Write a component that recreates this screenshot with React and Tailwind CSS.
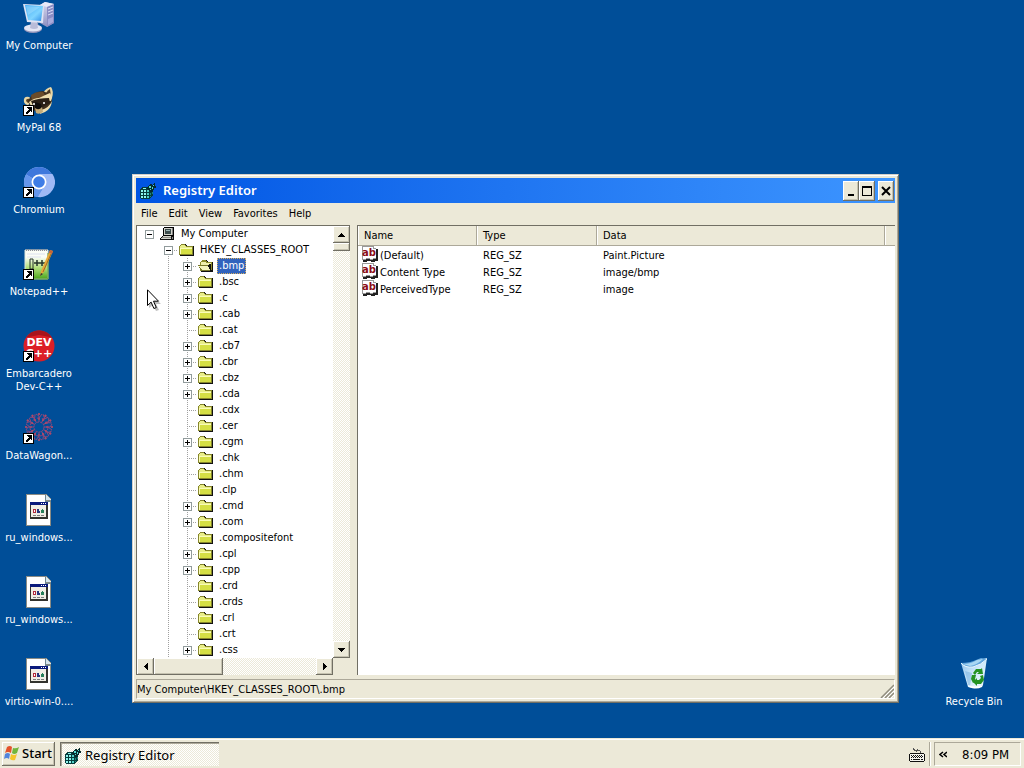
import React from 'react';

const RAISED =
  'bg-[#ece9d8] shadow-[inset_-1px_-1px_0_#716f64,inset_1px_1px_0_#ffffff,inset_-2px_-2px_0_#c5c2b0]';
const DITHER = 'bg-[repeating-conic-gradient(#ffffff_0_25%,#ece9d8_0_50%)] bg-[length:2px_2px]';
const DOTS_H = 'bg-[repeating-linear-gradient(90deg,#a0a0a0_0_1px,transparent_1px_2px)]';
const DOTS_V = 'bg-[repeating-linear-gradient(180deg,#a0a0a0_0_1px,transparent_1px_2px)]';

const keys = [
  ['.bmp', true],
  ['.bsc', true],
  ['.c', true],
  ['.cab', true],
  ['.cat', false],
  ['.cb7', true],
  ['.cbr', true],
  ['.cbz', true],
  ['.cda', true],
  ['.cdx', false],
  ['.cer', false],
  ['.cgm', true],
  ['.chk', false],
  ['.chm', false],
  ['.clp', false],
  ['.cmd', true],
  ['.com', true],
  ['.compositefont', false],
  ['.cpl', true],
  ['.cpp', true],
  ['.crd', false],
  ['.crds', false],
  ['.crl', false],
  ['.crt', false],
  ['.css', true],
];

const values = [
  { name: '(Default)', type: 'REG_SZ', data: 'Paint.Picture' },
  { name: 'Content Type', type: 'REG_SZ', data: 'image/bmp' },
  { name: 'PerceivedType', type: 'REG_SZ', data: 'image' },
];

function ShortcutArrow() {
  return (
    <g shapeRendering="crispEdges">
      <path d="M0 21h11v11H0z" fill="#000" />
      <path d="M1 22h9v9H1z" fill="#fff" />
      <path d="M4 23h5v5H8v-1H7v1H6v1H5v1H3v-2h1v-1h1v-1h1v-1H5v-1H4z" fill="#000" />
    </g>
  );
}

function ComputerIcon() {
  return (
    <svg width="32" height="32" viewBox="0 0 32 32">
      <defs>
        <linearGradient id="screen" x1="0" y1="0" x2="1" y2="1">
          <stop offset="0" stopColor="#3fa9f5" />
          <stop offset=".6" stopColor="#7fd4ff" />
          <stop offset="1" stopColor="#2f8fe8" />
        </linearGradient>
        <linearGradient id="tower" x1="0" y1="0" x2="0" y2="1">
          <stop offset="0" stopColor="#d9daf0" />
          <stop offset="1" stopColor="#8d8fc0" />
        </linearGradient>
      </defs>
      <path d="M17 3l5-3 9 2v19l-7 4-7-4z" fill="url(#tower)" />
      <path d="M17 3l5-3 9 2-7 3z" fill="#e8e9f8" />
      <path d="M24 5l7-3v19l-7 4z" fill="#8a8cc4" />
      <path d="M25 7l5-2M25 10l5-2M25 13l5-2" stroke="#dcdef6" />
      <path d="M25 17l5-2v5l-5 3z" fill="#a8aadb" />
      <path d="M8 21h7l1 5H7z" fill="#9a9cbe" />
      <ellipse cx="10" cy="27" rx="9" ry="4" fill="#9295bb" />
      <ellipse cx="10" cy="26" rx="9" ry="3.400" fill="#e4e6f4" />
      <path d="M8 20h6l1 6q-4 2-8 0z" fill="#b9bcd8" />
      <path d="M0 2l21 1-1 18L4 20z" fill="#dfe4f4" />
      <path d="M2 3l18 1-2 15L5 18z" fill="url(#screen)" />
      <path d="M3 4l14 1L5 13z" fill="#b4e6ff" opacity=".4" />
    </svg>
  );
}

function RaccoonIcon() {
  return (
    <svg width="32" height="32" viewBox="0 0 32 32">
      <path d="M1 18q-1-6 5-5l5 4-6 4q-3 0-4-3z" fill="#ead7a4" />
      <path d="M3 17q0-3 4-2l1 3-3 1z" fill="#5a4328" />
      <path d="M20 9q3-5 8-6 3 4 1 11l-4 3z" fill="#ead7a4" />
      <path d="M23 9q2-3 4-4 1 4 0 7z" fill="#4b3621" />
      <path d="M5 17Q10 7 20 7q8 3 9 10-2 9-10 11-10 2-14-11z" fill="#40301f" />
      <path d="M8 11q6-4 12-3l3 5-7 2-7 2z" fill="#6b4c2a" />
      <path d="M6 18q5-4 10-4 6-3 11-5l2 5-1 3q-6-1-11 2-6 0-9 3z" fill="#f0dfaf" />
      <path d="M8 17q8-3 18-3l1 5-7 4-4 1q-6 0-8-7z" fill="#2b2016" />
      <path d="M12 18l6 2 1 4-3 2-4-2z" fill="#120f0d" />
      <path d="M18 26q8-2 11-9-1 8-7 11l-5 2z" fill="#f0dfaf" />
      <circle cx="21" cy="19" r="1" fill="#fff" />
      <circle cx="11" cy="20" r="1" fill="#fff" />
      <path d="M12 24q4 3 7-1l1 5q-4 3-7 1z" fill="#c5ab78" />
      <ShortcutArrow />
    </svg>
  );
}

function ChromiumIcon() {
  return (
    <svg width="32" height="32" viewBox="0 0 32 32">
      <circle cx="16" cy="16" r="15" fill="#a5c5fb" />
      <path d="M16 16L3 8.500A15 15 0 0 1 29 8.500L31 16z" fill="#3f78dc" />
      <path d="M3 8.500A15 15 0 0 0 15 31l7-11-6-4z" fill="#6596eb" />
      <path d="M16 8h13.500A15 15 0 0 1 15 31l7-12z" fill="#9fb9f5" />
      <circle cx="16" cy="16" r="7.500" fill="#fff" />
      <circle cx="16" cy="16" r="5.800" fill="#3f7de6" />
      <ShortcutArrow />
    </svg>
  );
}

function NotepadIcon() {
  return (
    <svg width="32" height="32" viewBox="0 0 32 32">
      <defs>
        <linearGradient id="note" x1="0" y1="0" x2="0" y2="1">
          <stop offset=".25" stopColor="#fbfdf6" />
          <stop offset=".6" stopColor="#b5e17e" />
          <stop offset="1" stopColor="#4aa51a" />
        </linearGradient>
      </defs>
      <path d="M2 2h23v29H2z" fill="url(#note)" stroke="#dfe6dc" />
      <path d="M25 5v26H10" fill="none" stroke="#4c8f28" />
      <path d="M3 2h21" stroke="#90909a" strokeWidth="2" strokeDasharray="1 1" />
      <path d="M4 6h18M4 9h14" stroke="#dce0ee" />
      <path d="M7 11h3v10H7z" fill="none" stroke="#26352a" />
      <path d="M11 15h6M14 12v6M17 15h5M19 12v6" stroke="#26352a" strokeWidth="1.500" />
      <path d="M27 2l3 1-9 21-4 4 1-5z" fill="#e8a93b" />
      <path d="M27 2l3 1-1 3-3-1z" fill="#c66438" />
      <path d="M28 6l-8 18" stroke="#9e6b22" />
      <path d="M17 28l1-3 2 1z" fill="#333" />
      <ShortcutArrow />
    </svg>
  );
}

function DevIcon() {
  return (
    <svg width="32" height="32" viewBox="0 0 32 32">
      <circle cx="16" cy="16" r="15.500" fill="#dc1e26" />
      <path d="M16 .5a15.500 15.500 0 0 1 13 7L16 5 3 7.500a15.500 15.500 0 0 1 13-7z" fill="#a8141c" />
      <g fill="#fff" fontFamily="DejaVu Sans" fontWeight="bold" fontSize="11" textAnchor="middle">
        <text x="16" y="16">DEV</text>
        <text x="16" y="27">C++</text>
      </g>
      <ShortcutArrow />
    </svg>
  );
}

function WagonIcon() {
  const spokes = [0, 30, 60, 90, 120, 150, 180, 210, 240, 270, 300, 330];
  return (
    <svg width="32" height="32" viewBox="0 0 32 32">
      <g fill="none" stroke="#8d477b" strokeWidth="1">
        <circle cx="16" cy="15" r="5" strokeDasharray="2 1" />
        <circle cx="16" cy="15" r="9" strokeDasharray="3 2" />
        {spokes.map((a) => (
          <g key={a} transform={`rotate(${a} 16 15)`}>
            <path d="M16 10V4l-3-2M16 6l3-4" />
            <circle cx="16" cy="2" r=".7" fill="#b44a68" stroke="#b44a68" />
            <circle cx="16" cy="7" r=".5" stroke="#bd4864" />
          </g>
        ))}
      </g>
      <ShortcutArrow />
    </svg>
  );
}

function BatchIcon() {
  return (
    <svg width="32" height="32" viewBox="0 0 32 32" shapeRendering="crispEdges">
      <path d="M3 0h20l5 5v27H3z" fill="#8b8b84" />
      <path d="M4 1h18v6h5v24H4z" fill="#fff" />
      <path d="M23 1v5h5z" fill="#d7e7ef" />
      <path d="M22 1v6h6" fill="none" stroke="#6d858f" />
      <path d="M7 8h18v17H7z" fill="#33332e" />
      <path d="M8 9h15v14H8z" fill="#f1eee5" />
      <path d="M7 8h18v3H7z" fill="#0a1a7c" />
      <path d="M18 9h1v1h-1zM20 9h1v1h-1zM22 9h1v1h-1z" fill="#fff" />
      <path d="M10 15h3v4h-3z" fill="#b12a3b" />
      <path d="M11 16h1v2h-1z" fill="#fff" />
      <path d="M14 15h2v2h1v2h-3z" fill="#28367e" />
      <path d="M18 16h3v3h-3zM19 15h1v1h-1z" fill="#27805a" />
      <path d="M10 21h3M14 21h3M18 21h3" stroke="#7e7e7e" />
    </svg>
  );
}

function RecycleIcon() {
  return (
    <svg width="32" height="32" viewBox="0 0 32 32">
      <defs>
        <linearGradient id="bin" x1="0" y1="0" x2="1" y2="1">
          <stop offset="0" stopColor="#86bdeb" />
          <stop offset=".5" stopColor="#cfe9fa" />
          <stop offset="1" stopColor="#f2fbff" />
        </linearGradient>
      </defs>
      <path d="M3 5Q15 8 20 2l9-2-4 27q-6 5-15 2z" fill="url(#bin)" />
      <path d="M3 5q9 0 15-3l5-2 6 1q-6 6-14 8-8 1-12-4z" fill="#62a5dc" />
      <path d="M5 6q8 0 14-4l6-1q-6 6-13 7z" fill="#a9d7f3" />
      <path d="M3 5q4 5 12 4 8-2 14-8" fill="none" stroke="#eefaff" />
      <path d="M7 13l7 2-2 13-2-1z" fill="#7ab3e0" opacity=".55" />
      <path d="M10 27q7 3 15 0l-1 2q-6 3-13 0z" fill="#fff" />
      <g fill="#259323">
        <path d="M15 15l3-4h5l1-1 1 6h-6l2-2h-2l-2 3z" />
        <path d="M25 17l1 5-3 4h-4v2l-4-4 4-4v2h2l2-2-1-2z" />
        <path d="M14 17h4l-1 4 1 2-3 2-2-4z" />
      </g>
    </svg>
  );
}

function RegeditIcon() {
  return (
    <svg width="16" height="16" viewBox="0 0 16 16" className="shrink-0" shapeRendering="crispEdges">
      <path d="M0 6l3-2h4l2 1h3l1 1v6l-4 4H1l-1-1z" fill="#063c3c" />
      <path d="M1 7h2v2H1zM4 7h2v2H4zM1 10h2v2H1zM4 10h2v2H4zM1 13h2v2H1zM4 13h2v2H4zM3 5h3v1H3z" fill="#8ff5ee" />
      <path d="M7 7h2v2H7zM7 10h2v2H7zM7 13h2v2H7z" fill="#4fd0c8" />
      <path d="M10 10h1v2h-1zM10 13h1v1h-1zM12 9h1v2h-1z" fill="#188880" />
      <path d="M7 4l3-2V1h2v1l2-2h1v2l-1 1h2v2h-2v2h-1v2h-3L7 6z" fill="#052c2e" />
      <path d="M9 3h2v2H9zM12 4h1v2h-1zM10 6h1v1h-1zM13 2h1v1h-1z" fill="#52d9cf" />
    </svg>
  );
}

function PcIcon() {
  return (
    <svg width="16" height="16" viewBox="0 0 16 16" shapeRendering="crispEdges">
      <path d="M4 1h10v9H3V2z" fill="#000" />
      <path d="M4 2h8v7H4z" fill="#d0d0c8" />
      <path d="M5 3h6v5H5z" fill="#3c4c4c" />
      <path d="M6 4h4v1H6z" fill="#9cb4b4" />
      <path d="M12 2h1v7h-1z" fill="#808080" />
      <path d="M2 10h12v4H0v-2h1v-1h1z" fill="#111" />
      <path d="M3 10h8v1H3zM1 12h10v1H1z" fill="#d2d2ca" />
      <path d="M2 11h9v1H2z" fill="#8e8e88" />
      <path d="M12 11h1v2h-1z" fill="#888" />
    </svg>
  );
}

function FolderIcon({ open }) {
  return (
    <svg width="16" height="16" viewBox="0 0 16 16" shapeRendering="crispEdges">
      {open ? (
        <>
          <path d="M3 3h1V2h5v1h1v1h5v10H3v-1H2V4h1z" fill="#111" />
          <path d="M2 4h1V3h1V2h4v1h1v1h5v9H2z" fill="#8c8c2c" />
          <path d="M3 4h5v1h5v7H3z" fill="#f0f0ad" />
          <path d="M0 7h11l3 6H3z" fill="#77772a" />
          <path d="M1 8h9l2 4H4z" fill="#f4f4bd" />
          <path d="M11 6h2v6h1v1h-2v-2h-1V9h-1V7h1z" fill="#111" />
        </>
      ) : (
        <>
          <path d="M2 3h1V2h4v1h1v1h7v10H1v-1h1z" fill="#111" />
          <path d="M0 4h1V3h1V2h4v1h1v1h7v9H0z" fill="#86862c" />
          <path d="M1 4h1V3h4v1h1v1h6v1H1z" fill="#e9ee8a" />
          <path d="M1 6h12v6H1z" fill="#d5df45" />
          <path d="M1 6.500h12M1.500 6v6" fill="none" stroke="#f9fbb8" />
        </>
      )}
    </svg>
  );
}

function StringIcon() {
  return (
    <svg width="16" height="16" viewBox="0 0 16 16" className="shrink-0 self-start">
      <g shapeRendering="crispEdges">
        <path d="M2 2h12v1h2v12h-3v1H9v-1H5v1H1v-2h1z" fill="#222" />
        <path d="M0 0h12v2h2v11h-3v1H8v-1H4v1H0z" fill="#999" />
        <path d="M1 1h10v2h3v9h-3v1H8v-1H4v1H1z" fill="#fff" />
      </g>
      <text x="7" y="10" fill="#8c0d18" fontFamily="DejaVu Sans" fontWeight="bold" fontSize="10" textAnchor="middle">
        ab
      </text>
    </svg>
  );
}

function WindowsFlag() {
  return (
    <svg width="16" height="16" viewBox="0 0 16 16" className="shrink-0">
      <path d="M3 2q3-2 5 0L7 8Q4 6 1 8z" fill="#e4532c" />
      <path d="M9 3q3 1 6-1l-2 6q-3 2-5 0z" fill="#71b63c" />
      <path d="M1 9q3-2 5 0l-1 5q-2-2-5 0z" fill="#5385dc" />
      <path d="M7 9q3 2 6 0l-2 6q-3 1-5-1z" fill="#f5c52b" />
    </svg>
  );
}

function KeyboardIcon() {
  return (
    <svg width="16" height="15" viewBox="0 0 16 15" shapeRendering="crispEdges">
      <path d="M4 1h1v1h1v1h2V2h1v1h2v1h1v2h-1V4H8v1H7V4H5V3H4z" fill="#555" />
      <path d="M1 6h14v1h1v7h-1v1H1v-1H0V7h1z" fill="#111" />
      <path d="M1 7h14v7H1z" fill="#f5f5ef" />
      <path d="M2 8.500h12M2 10.500h12" stroke="#111" strokeWidth="1" strokeDasharray="1 1" />
      <path d="M3 9.500h11" stroke="#111" strokeDasharray="1 1" />
      <path d="M2 12.500h1M4 12.500h7M12 12.500h2" stroke="#111" />
    </svg>
  );
}

function Arrow({ dir }) {
  const paths = {
    up: 'M3 0h1v1h1v1h1v1h1v1H0V3h1V2h1V1h1z',
    down: 'M0 0h7v1H6v1H5v1H4v1H3V3H2V2H1V1H0z',
    left: 'M3 0h1v7H3V6H2V5H1V4H0V3h1V2h1V1h1z',
    right: 'M0 0h1v1h1v1h1v1h1v1H3v1H2v1H1v1H0z',
  };
  const flat = dir === 'up' || dir === 'down';
  return (
    <svg width={flat ? 7 : 4} height={flat ? 4 : 7} shapeRendering="crispEdges">
      <path d={paths[dir]} fill="#000" />
    </svg>
  );
}

function ScrollButton({ dir }) {
  return (
    <button
      type="button"
      aria-label={`Scroll ${dir}`}
      className={`${RAISED} flex size-[17px] shrink-0 items-center justify-center`}
    >
      <Arrow dir={dir} />
    </button>
  );
}

function DesktopIcon({ icon, label }) {
  return (
    <button type="button" className="flex h-[82px] w-[78px] shrink-0 flex-col items-center gap-[5px] pt-[2px] text-[11px] leading-[13px] text-white">
      {icon}
      <span>{label}</span>
    </button>
  );
}

function Expander({ open }) {
  return (
    <button
      type="button"
      aria-label={open ? 'Collapse' : 'Expand'}
      className="relative flex size-[9px] items-center justify-center border border-[#919b9c] bg-white"
    >
      <svg width="5" height="5" shapeRendering="crispEdges">
        <path d={open ? 'M0 2h5v1H0z' : 'M0 2h5v1H0zM2 0h1v5H2z'} fill="#000" />
      </svg>
    </button>
  );
}

function TreeRow({ depth, label, icon, expandable, open, selected, first }) {
  return (
    <li className="flex h-[16px] items-center pl-[3px]">
      {depth > 0 && <span className="w-[19px] shrink-0" />}
      {depth > 1 && (
        <span className="flex h-full w-[19px] shrink-0 justify-center">
          <span className={`w-px ${DOTS_V}`} />
        </span>
      )}
      <span className="relative flex h-full w-[19px] shrink-0 items-center justify-center">
        {depth > 0 && (
          <>
            <span className={`absolute bottom-0 left-[9px] w-px ${DOTS_V} ${first ? 'top-[8px]' : 'top-0'}`} />
            <span className={`absolute left-[9px] right-0 top-[8px] h-px ${DOTS_H}`} />
          </>
        )}
        {expandable && <Expander open={open} />}
      </span>
      <span className="flex w-[20px] shrink-0 pl-px">{icon}</span>
      <span
        className={
          selected
            ? 'bg-[#3163bd] px-[2px] leading-[16px] text-white outline-1 -outline-offset-1 outline-dotted outline-[#d8b060]'
            : 'px-[2px] leading-[16px]'
        }
      >
        {label}
      </span>
    </li>
  );
}

function TreePane() {
  return (
    <div className="flex w-[214px] shrink-0 flex-col border-l border-t border-[#716f64] bg-white">
      <div className="flex min-h-0 flex-1">
        <ul className="min-w-0 flex-1 overflow-hidden whitespace-nowrap">
          <TreeRow depth={0} label="My Computer" icon={<PcIcon />} expandable open />
          <TreeRow depth={1} label="HKEY_CLASSES_ROOT" icon={<FolderIcon />} expandable open first />
          {keys.map(([label, expandable], i) => (
            <TreeRow
              key={label}
              depth={2}
              label={label}
              icon={<FolderIcon open={i === 0} />}
              expandable={expandable}
              selected={i === 0}
            />
          ))}
        </ul>
        <div className={`flex w-[17px] shrink-0 flex-col ${DITHER}`}>
          <ScrollButton dir="up" />
          <div className={`h-[8px] ${RAISED}`} />
          <div className="flex-1" />
          <ScrollButton dir="down" />
        </div>
      </div>
      <div className="flex h-[17px] shrink-0 bg-[#ece9d8]">
        <div className={`flex flex-1 ${DITHER}`}>
          <ScrollButton dir="left" />
          <div className={`w-[69px] ${RAISED}`} />
          <div className="flex-1" />
          <ScrollButton dir="right" />
        </div>
        <div className="w-[17px]" />
      </div>
    </div>
  );
}

function ListPane() {
  const th =
    'h-[20px] border-b border-[#aca899] bg-[#ece9d8] pl-[6px] text-left font-normal shadow-[inset_-1px_0_0_#aca899,inset_1px_0_0_#ffffff]';
  return (
    <div className="min-w-0 flex-1 border-l border-t border-[#716f64] bg-white">
      <table className="w-full table-fixed border-separate border-spacing-0">
        <colgroup>
          <col className="w-[119px]" />
          <col className="w-[120px]" />
          <col />
          <col className="w-[10px]" />
        </colgroup>
        <thead>
          <tr>
            <th className={th}>Name</th>
            <th className={th}>Type</th>
            <th className={th}>Data</th>
            <td className="border-b border-[#aca899] bg-[#ece9d8] shadow-[inset_1px_0_0_#ffffff]" />
          </tr>
        </thead>
        <tbody className="align-bottom leading-[15px]">
          {values.map((v) => (
            <tr key={v.name} className="h-[17px]">
              <td className="pl-[4px] align-bottom">
                <span className="flex h-[17px] items-end gap-[2px]">
                  <StringIcon />
                  {v.name}
                </span>
              </td>
              <td className="pl-[6px] align-bottom">{v.type}</td>
              <td className="pl-[6px] align-bottom">{v.data}</td>
              <td />
            </tr>
          ))}
        </tbody>
      </table>
    </div>
  );
}

function TitleButton({ label, children }) {
  return (
    <button type="button" aria-label={label} className={`${RAISED} flex h-[20px] w-[16px] items-center justify-center`}>
      {children}
    </button>
  );
}

function RegistryWindow() {
  return (
    <section className="absolute bottom-[35px] left-[132px] right-[125px] top-[174px] flex flex-col border border-[#d4d0c8] border-b-[#716f64] border-r-[#716f64] bg-[#ece9d8] p-[3px] shadow-[inset_1px_1px_0_#ffffff,inset_-1px_-1px_0_#aca899]">
      <header className="flex h-[25px] shrink-0 items-center bg-linear-to-r from-[#0054e3] to-[#3d95ff] pl-[4px] pr-px">
        <RegeditIcon />
        <h1 className="ml-[7px] flex-1 font-['Noto_Sans',sans-serif] text-[13px] font-semibold text-white">Registry Editor</h1>
        <TitleButton label="Minimize">
          <svg width="10" height="10" shapeRendering="crispEdges">
            <path d="M2 8h6v2H2z" />
          </svg>
        </TitleButton>
        <TitleButton label="Maximize">
          <svg width="10" height="10" shapeRendering="crispEdges">
            <path d="M0 0h10v10H0zM1 2v7h8V2z" fillRule="evenodd" />
          </svg>
        </TitleButton>
        <span className="w-[3px]" />
        <TitleButton label="Close">
          <svg width="10" height="10">
            <path d="M1 1l8 8M9 1l-8 8" stroke="#000" strokeWidth="2" />
          </svg>
        </TitleButton>
      </header>
      <nav className="mb-[2px] flex h-[20px] shrink-0 items-center gap-px">
        {['File', 'Edit', 'View', 'Favorites', 'Help'].map((m) => (
          <button key={m} type="button" className="px-[5px]">
            {m}
          </button>
        ))}
      </nav>
      <div className="flex min-h-0 flex-1 gap-[7px]">
        <TreePane />
        <ListPane />
      </div>
      <footer className="mt-[4px] flex h-[20px] shrink-0 items-center justify-between border border-[#aca899] border-b-white border-r-white">
        <span className="pt-px">My Computer\HKEY_CLASSES_ROOT\.bmp</span>
        <svg width="14" height="14" className="self-end">
          <path d="M1 14L14 1M5 14l9-9M9 14l5-5" stroke="#8f8c7e" strokeWidth="1.500" />
          <path d="M3 14L14 3M7 14l7-7M11 14l3-3" stroke="#fff" />
        </svg>
      </footer>
    </section>
  );
}

function Taskbar() {
  return (
    <footer className="flex h-[30px] shrink-0 items-stretch border-t border-[#ece9d8] bg-[#ece9d8] pb-[2px] pl-[2px] pr-[3px] pt-[3px] shadow-[inset_0_1px_0_#ffffff]">
      <button
        type="button"
        className={`${RAISED} flex w-[53px] items-center gap-[2px] pb-[2px] pl-[2px] font-['Noto_Sans',sans-serif] text-[13px] font-medium`}
      >
        <WindowsFlag />
        Start
      </button>
      <button
        type="button"
        className={`${DITHER} ml-[5px] flex w-[159px] items-center gap-[4px] border-l border-t border-[#716f64] pl-[4px] pt-[2px] font-['Noto_Sans',sans-serif] text-[13px] shadow-[inset_1px_1px_0_#aca899]`}
      >
        <RegeditIcon />
        Registry Editor
      </button>
      <div className="ml-auto flex items-center gap-[4px]">
        <KeyboardIcon />
        <span className="h-full w-[2px] border-l border-[#aca899] bg-white" />
      </div>
      <div className="ml-[3px] flex w-[87px] items-center border border-[#aca899] border-b-white border-r-white pl-[4px]">
        <button type="button" aria-label="Show hidden icons">
          <svg width="8" height="7" fill="none" stroke="#000" strokeWidth="1.500">
            <path d="M4 1L1 3.500 4 6M8 1L5 3.500 8 6" />
          </svg>
        </button>
        <time className="ml-[15px] whitespace-nowrap text-[13px]">8:09 PM</time>
      </div>
    </footer>
  );
}

export default function App() {
  return (
    <div className="flex h-screen flex-col overflow-hidden bg-[#004e98] font-['DejaVu_Sans_Condensed','DejaVu_Sans',sans-serif] text-[11px] leading-[13px] text-black">
      <main className="relative min-h-0 flex-1 overflow-hidden">
        <div className="flex flex-col">
          <DesktopIcon icon={<ComputerIcon />} label="My Computer" />
          <DesktopIcon icon={<RaccoonIcon />} label="MyPal 68" />
          <DesktopIcon icon={<ChromiumIcon />} label="Chromium" />
          <DesktopIcon icon={<NotepadIcon />} label="Notepad++" />
          <DesktopIcon icon={<DevIcon />} label="Embarcadero Dev-C++" />
          <DesktopIcon icon={<WagonIcon />} label="DataWagon..." />
          <DesktopIcon icon={<BatchIcon />} label="ru_windows..." />
          <DesktopIcon icon={<BatchIcon />} label="ru_windows..." />
          <DesktopIcon icon={<BatchIcon />} label="virtio-win-0...." />
        </div>
        <div className="absolute bottom-0 right-[11px]">
          <DesktopIcon icon={<RecycleIcon />} label="Recycle Bin" />
        </div>
        <RegistryWindow />
        <svg width="16" height="24" viewBox="0 0 16 24" className="absolute left-[147px] top-[289px]">
          <path d="M2 4v15l4-3 3 6 3-1-3-6h5z" fill="#000" opacity=".25" />
          <path d="M.5.8v15.700l3.600-3.400 2.800 6.400 2.400-1-2.800-6.300h5z" fill="#fff" stroke="#000" />
        </svg>
      </main>
      <Taskbar />
    </div>
  );
}
